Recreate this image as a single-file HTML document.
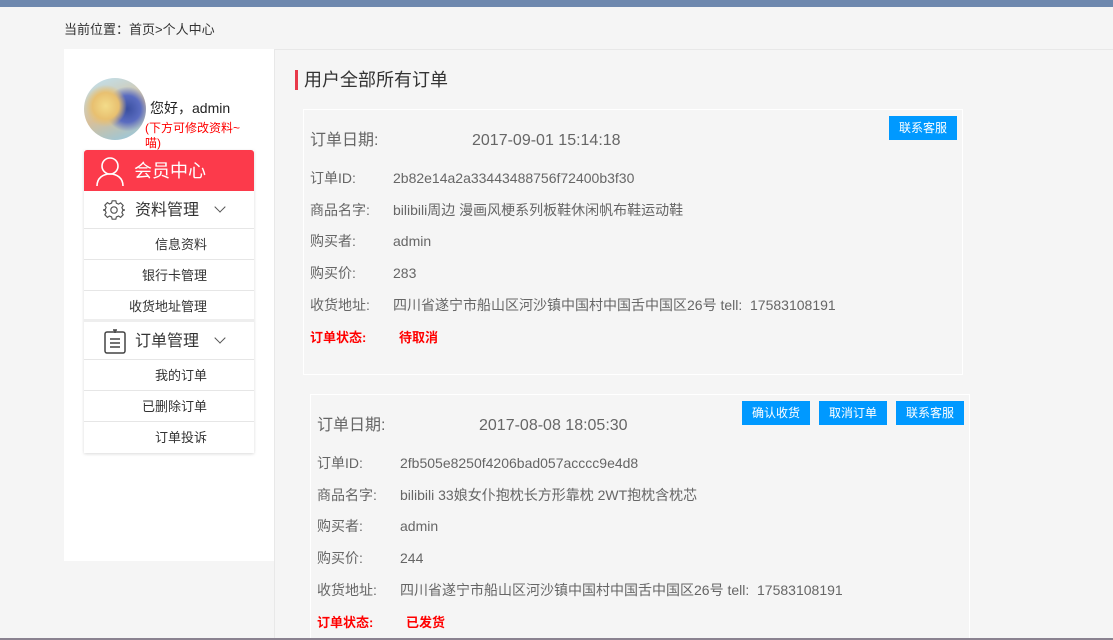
<!DOCTYPE html>
<html><head><meta charset="utf-8">
<style>
*{margin:0;padding:0;box-sizing:border-box}
html,body{width:1113px;height:640px;overflow:hidden}
body{background:#f5f5f5;font-family:"Liberation Sans","Noto Sans CJK SC",sans-serif;position:relative;color:#333}
.top{position:absolute;left:0;top:0;width:1113px;height:7px;background:#6e88ae}
.bot{position:absolute;left:0;top:638px;width:1113px;height:2px;background:#8a8290}
.crumb{position:absolute;left:64px;top:19px;font-size:13px;color:#333}
.side{position:absolute;left:64px;top:49px;width:210px;height:512px;background:#fff}
.av{position:absolute;left:84px;top:78px;width:62px;height:62px;border-radius:50%;background:radial-gradient(circle at 35% 45%,#f3dc8a 0,#e8c070 25%,transparent 40%),radial-gradient(circle at 70% 50%,#3a4fa0 0,#5a6cc0 25%,transparent 42%),linear-gradient(160deg,#bfe3f5,#d8c09a 55%,#8fc8e6)}
.hi{position:absolute;left:150px;top:99px;font-size:14px;line-height:18px;color:#222}
.tip{position:absolute;left:145px;top:121px;width:110px;font-size:12px;line-height:15px;color:#f00}
.menu{position:absolute;left:84px;top:150px;width:170px;box-shadow:0 1px 3px rgba(0,0,0,.15);background:#fff}
.mc{height:41px;background:#fc3a4b;border-radius:3px 3px 0 0;color:#fff;font-size:18px;line-height:43px;padding-left:50px;position:relative}
.grp{height:38px;border-bottom:1px solid #e6e6e6;font-size:16px;line-height:40px;padding-left:51px;position:relative;color:#333}
.grp .ch{position:absolute;left:132px;top:12px;width:8px;height:8px;border-right:1.3px solid #555;border-bottom:1.3px solid #555;transform:rotate(45deg)}
.it{height:31px;border-bottom:1px solid #e6e6e6;font-size:13px;line-height:31px;text-align:right;padding-right:47px;color:#333}
.main{position:absolute;left:274px;top:49px;width:839px;height:589px;border-left:1px solid #e8e8e8;border-top:1px solid #e8e8e8}
.ttl{position:absolute;left:295px;top:70px;border-left:3px solid #e8394a;padding-left:6px;font-size:18px;line-height:20px;color:#333}
.card{position:absolute;width:660px;border:1px solid #fff;overflow:hidden}
.row{position:absolute;left:6px;font-size:14px;line-height:20px;color:#666;white-space:nowrap}
.row b{display:inline-block;width:83px;font-weight:normal}
.date{font-size:16px}
.date b{width:162px}
.st{color:#f00;font-weight:bold;font-size:13px}
.st b{width:89px;font-weight:bold}
.btn{position:absolute;top:6px;height:24px;width:68px;background:#0099ff;color:#fff;font-size:12px;line-height:24px;text-align:center}
</style></head><body>
<div class="top"></div>
<div class="crumb">当前位置：首页&gt;个人中心</div>
<div class="side"></div>
<div class="av"></div>
<div class="hi">您好，admin</div>
<div class="tip">(下方可修改资料~喵)</div>
<div class="menu">
 <div class="mc"><svg style="position:absolute;left:10px;top:5px" width="32" height="32" viewBox="0 0 32 32" fill="none" stroke="#fff" stroke-width="1.6"><circle cx="16" cy="11" r="8"/><path d="M3 31c0-8 6-12 13-12s13 4 13 12"/></svg>会员中心</div>
 <div class="grp"><svg style="position:absolute;left:19px;top:8px" width="22" height="22" viewBox="0 0 24 24" fill="none" stroke="#555" stroke-width="1.3"><circle cx="12" cy="12" r="3.5"/><path d="M10 2h4l.6 2.6 2.3 1 2.3-1.4 2.8 2.8-1.4 2.3 1 2.3L24 12v0l-2.4.6-1 2.3 1.4 2.3-2.8 2.8-2.3-1.4-2.3 1L14 22h-4l-.6-2.4-2.3-1-2.3 1.4-2.8-2.8 1.4-2.3-1-2.3L0 12l2.4-.6 1-2.3L2 6.8 4.8 4l2.3 1.4 2.3-1z"/></svg>资料管理<i class="ch"></i></div>
 <div class="it">信息资料</div>
 <div class="it">银行卡管理</div>
 <div class="it" style="border-bottom:3px solid #eee">收货地址管理</div>
 <div class="grp"><svg style="position:absolute;left:20px;top:7px" width="22" height="25" viewBox="0 0 22 25" fill="none" stroke="#444" stroke-width="1.5"><rect x="1" y="3" width="20" height="21" rx="2"/><path d="M9 1h4M11 1v3M6 10h10M6 14h10M6 18h10"/></svg>订单管理<i class="ch"></i></div>
 <div class="it">我的订单</div>
 <div class="it">已删除订单</div>
 <div class="it" style="border-bottom:none">订单投诉</div>
</div>
<div class="main"></div>
<div class="ttl">用户全部所有订单</div>

<div class="card" style="left:303px;top:109px;height:266px">
 <div class="btn" style="left:585px">联系客服</div>
 <div class="row date" style="top:21px"><b>订单日期:</b>2017-09-01 15:14:18</div>
 <div class="row" style="top:58px"><b>订单ID:</b>2b82e14a2a33443488756f72400b3f30</div>
 <div class="row" style="top:90px"><b>商品名字:</b>bilibili周边 漫画风梗系列板鞋休闲帆布鞋运动鞋</div>
 <div class="row" style="top:121px"><b>购买者:</b>admin</div>
 <div class="row" style="top:153px"><b>购买价:</b>283</div>
 <div class="row" style="top:185px"><b>收货地址:</b>四川省遂宁市船山区河沙镇中国村中国舌中国区26号 tell:&nbsp; 17583108191</div>
 <div class="row st" style="top:218px"><b>订单状态:</b>待取消</div>
</div>

<div class="card" style="left:310px;top:394px;height:260px">
 <div class="btn" style="left:431px">确认收货</div>
 <div class="btn" style="left:508px">取消订单</div>
 <div class="btn" style="left:585px">联系客服</div>
 <div class="row date" style="top:21px"><b>订单日期:</b>2017-08-08 18:05:30</div>
 <div class="row" style="top:58px"><b>订单ID:</b>2fb505e8250f4206bad057acccc9e4d8</div>
 <div class="row" style="top:90px"><b>商品名字:</b>bilibili 33娘女仆抱枕长方形靠枕 2WT抱枕含枕芯</div>
 <div class="row" style="top:121px"><b>购买者:</b>admin</div>
 <div class="row" style="top:153px"><b>购买价:</b>244</div>
 <div class="row" style="top:185px"><b>收货地址:</b>四川省遂宁市船山区河沙镇中国村中国舌中国区26号 tell:&nbsp; 17583108191</div>
 <div class="row st" style="top:218px"><b>订单状态:</b>已发货</div>
</div>
<div class="bot"></div>
</body></html>
